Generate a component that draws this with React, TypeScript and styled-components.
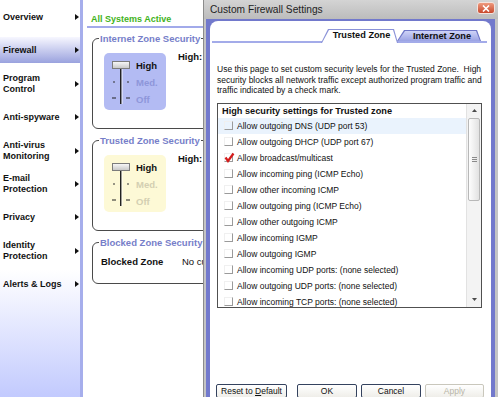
import styled, { createGlobalStyle } from "styled-components";

const GlobalStyle = createGlobalStyle`
  html, body {
    margin: 0;
    padding: 0;
  }
  body {
    font-family: "Liberation Sans", Arial, sans-serif;
    background: #fff;
  }
`;

const Screen = styled.div`
  display: flex;
  width: 498px;
  height: 397px;
  overflow: hidden;
  background: #fff;
`;

/* ---------- left navigation ---------- */

const Sidebar = styled.nav`
  flex: none;
  width: 80px;
  border-right: 3px solid #a6aeec;
  background: linear-gradient(to bottom, #fff 0%, #fff 68%, #c2cafe 100%);
  display: flex;
  flex-direction: column;
  gap: 7.4px;
  padding-top: 4px;
`;

const NavItem = styled.div<{ $active?: boolean }>`
  height: 26px;
  display: flex;
  align-items: center;
  justify-content: space-between;
  padding: 0 1px 0 3px;
  font-size: 9px;
  font-weight: bold;
  line-height: 11px;
  color: #111;
  background: ${(p) =>
    p.$active ? "linear-gradient(to bottom, #f7f7ff, #9aa2de)" : "transparent"};
`;

const Arrow = styled.span`
  width: 0;
  height: 0;
  border-left: 4px solid #111;
  border-top: 3px solid transparent;
  border-bottom: 3px solid transparent;
`;

/* ---------- main content (behind the dialog) ---------- */

const Content = styled.main`
  flex: none;
  width: 120px;
  overflow: hidden;
`;

const StatusHeader = styled.div`
  margin: 14px 0 0 4px;
  padding: 0 0 1px 4px;
  border-bottom: 2px solid #a2aaea;
  font-size: 9px;
  font-weight: bold;
  line-height: 11px;
  color: #3fb31c;
  white-space: nowrap;
`;

const Zone = styled.fieldset<{ $gap: number; $pad: string }>`
  margin: ${(p) => p.$gap}px 0 0 9px;
  padding: ${(p) => p.$pad};
  width: 200px;
  box-sizing: border-box;
  border: 1px solid #4a4a4a;
  border-radius: 6px;
`;

const ZoneTitle = styled.legend`
  margin-left: 6px;
  padding: 0 1px;
  font-size: 9.5px;
  font-weight: bold;
  line-height: 11px;
  color: #767ec9;
  white-space: nowrap;
`;

const ZoneRow = styled.div<{ $indent: number }>`
  display: flex;
  align-items: flex-start;
  gap: 12px;
  padding-left: ${(p) => p.$indent}px;
  font-size: 9.5px;
  line-height: 11px;
  white-space: nowrap;
  color: #111;
`;

const Strong = styled.span<{ $width?: number }>`
  font-weight: bold;
  margin-top: ${(p) => (p.$width ? 0 : -2)}px;
  width: ${(p) => (p.$width ? `${p.$width}px` : "auto")};
`;

const LevelBox = styled.div<{ $bg: string }>`
  flex: none;
  width: 62px;
  height: 57px;
  border-radius: 5px;
  background: ${(p) => p.$bg};
  display: flex;
`;

const LevelTrack = styled.svg`
  flex: none;
`;

const LevelLabels = styled.div`
  display: flex;
  flex-direction: column;
  gap: 6px;
  padding-top: 6.5px;
`;

const LevelLabel = styled.span<{ $color: string }>`
  font-size: 9.5px;
  font-weight: bold;
  line-height: 11px;
  color: ${(p) => p.$color};
`;

/* ---------- dialog window ---------- */

const Dialog = styled.section`
  flex: none;
  width: 295px;
  box-sizing: border-box;
  border-left: 1px solid #8c8c8c;
  padding: 0 3px 0 2px;
  background: #c4c4c4;
  display: flex;
  flex-direction: column;
`;

const TitleBar = styled.div`
  height: 19px;
  flex: none;
  display: flex;
  align-items: flex-start;
  justify-content: space-between;
  padding-left: 4px;
  background: linear-gradient(to bottom, #d4d4d4, #bcbcbc);
  margin: 0 -3px 0 -2px;
  padding-right: 3px;
  font-size: 10.2px;
  line-height: 19px;
  color: #1e1e1e;
`;

const TitleText = styled.span`
  margin-left: 2px;
`;

const CloseButton = styled.div`
  margin-top: 2px;
  width: 18px;
  height: 12px;
  box-sizing: border-box;
  border: 1px solid #f4e2dc;
  border-radius: 3px;
  background: linear-gradient(to bottom, #ee9a7e, #c8482c);
  display: flex;
  align-items: center;
  justify-content: center;
`;

const Frame = styled.div`
  flex: 1;
  background: #7279cc;
  padding: 2px 4px 0 4px;
  display: flex;
  margin: 0 -3px 0 -2px;
  border-right: 3px solid #c4c4c4;
  border-left: 2px solid #c4c4c4;
`;

const Panel = styled.div`
  flex: 1;
  background: #fff;
  border-radius: 8px 8px 0 0;
  display: flex;
  flex-direction: column;
  min-width: 0;
`;

const TabStrip = styled.div`
  margin: 8px 4px 0 2px;
  padding-right: 6px;
  height: 12px;
  display: flex;
  justify-content: flex-end;
  align-items: flex-end;
  border-bottom: 2px solid #a3abe9;
`;

const Tab = styled.div<{ $active?: boolean; $width: number }>`
  position: relative;
  width: ${(p) => p.$width}px;
  height: ${(p) => (p.$active ? 14 : 11)}px;
  margin-bottom: ${(p) => (p.$active ? -2 : 0)}px;
  margin-left: ${(p) => (p.$active ? 0 : -1)}px;
  z-index: ${(p) => (p.$active ? 2 : 1)};
  background: ${(p) => (p.$active ? "#8a92d8" : "#6d75c6")};
  clip-path: polygon(0 100%, 7px 0, calc(100% - 4px) 0, 100% 100%);
  display: flex;
  align-items: flex-start;
  justify-content: center;
  padding-left: ${(p) => (p.$active ? 4 : 6)}px;
  box-sizing: border-box;
  font-size: 9.2px;
  font-weight: bold;
  line-height: 12px;
  color: #111;

  &::before {
    content: "";
    position: absolute;
    left: 1px;
    right: 1px;
    top: 1px;
    bottom: 0;
    background: ${(p) =>
      p.$active ? "#fff" : "linear-gradient(to bottom, #cfd3f7, #9aa2e3)"};
    clip-path: polygon(0 100%, 7px 0, calc(100% - 4px) 0, 100% 100%);
  }
`;

const TabText = styled.span`
  position: relative;
`;

const Intro = styled.p`
  margin: 21px 0 0 7px;
  font-size: 8.5px;
  line-height: 10.5px;
  color: #111;
  white-space: nowrap;
`;

const ListBox = styled.div`
  margin: 7px 9px 0 7px;
  height: 205px;
  flex: none;
  box-sizing: border-box;
  border: 1px solid #505050;
  display: flex;
  overflow: hidden;
`;

const ListBody = styled.div`
  flex: 1;
  min-width: 0;
`;

const ListHeader = styled.div`
  height: 14px;
  padding-left: 4px;
  font-size: 9.2px;
  font-weight: bold;
  line-height: 14px;
  color: #111;
  white-space: nowrap;
`;

const Row = styled.div<{ $selected?: boolean }>`
  height: 16px;
  display: flex;
  align-items: center;
  gap: 4px;
  padding-left: 6px;
  background: ${(p) => (p.$selected ? "#eaf3fd" : "transparent")};
  font-size: 8.5px;
  color: #111;
  white-space: nowrap;
`;

const Check = styled.span`
  position: relative;
  flex: none;
  width: 9px;
  height: 9px;
  box-sizing: border-box;
  border-right: 1px solid #9a9a9a;
  border-bottom: 1px solid #9a9a9a;
  border-left: 1px solid #f0f0f0;
  border-top: 1px solid #f0f0f0;
`;

const CheckMark = styled.svg`
  position: absolute;
  left: -1px;
  top: -2px;
`;

const ScrollBar = styled.div`
  flex: none;
  width: 14px;
  background: #f3f3f3;
  border-left: 1px solid #e2e2e2;
  display: flex;
  flex-direction: column;
`;

const ScrollArrow = styled.div`
  height: 14px;
  flex: none;
  display: flex;
  align-items: center;
  justify-content: center;
`;

const ScrollThumb = styled.div`
  height: 83px;
  margin: 0 1px;
  box-sizing: border-box;
  border: 1px solid #b8b8b8;
  border-radius: 2px;
  background: linear-gradient(to right, #fdfdfd, #e2e2e2);
  display: flex;
  flex-direction: column;
  align-items: center;
  justify-content: center;
  gap: 1px;
`;

const Grip = styled.span`
  width: 5px;
  height: 1px;
  background: #8a8a8a;
`;

const Spacer = styled.div`
  flex: 1;
`;

const ButtonRow = styled.div`
  margin-top: 76px;
  padding-left: 6px;
  display: flex;
  gap: 4px;
`;

const Button = styled.div<{ $width: number; $disabled?: boolean; $spaced?: boolean }>`
  width: ${(p) => p.$width}px;
  height: 14px;
  box-sizing: border-box;
  margin-right: ${(p) => (p.$spaced ? 6 : 0)}px;
  border: 1px solid ${(p) => (p.$disabled ? "#c9c7bc" : "#34425e")};
  border-radius: 2px;
  background: linear-gradient(to bottom, #ffffff, #efeee9);
  color: ${(p) => (p.$disabled ? "#b8b5a8" : "#111")};
  font-size: 8.5px;
  line-height: 12px;
  text-align: center;
`;

/* ---------- data ---------- */

const navItems = [
  ["Overview"],
  ["Firewall"],
  ["Program", "Control"],
  ["Anti-spyware"],
  ["Anti-virus", "Monitoring"],
  ["E-mail", "Protection"],
  ["Privacy"],
  ["Identity", "Protection"],
  ["Alerts & Logs"],
];

const rules = [
  { label: "Allow outgoing DNS (UDP port 53)", selected: true },
  { label: "Allow outgoing DHCP (UDP port 67)" },
  { label: "Allow broadcast/multicast", checked: true },
  { label: "Allow incoming ping (ICMP Echo)" },
  { label: "Allow other incoming ICMP" },
  { label: "Allow outgoing ping (ICMP Echo)" },
  { label: "Allow other outgoing ICMP" },
  { label: "Allow incoming IGMP" },
  { label: "Allow outgoing IGMP" },
  { label: "Allow incoming UDP ports: (none selected)" },
  { label: "Allow outgoing UDP ports: (none selected)" },
  { label: "Allow incoming TCP ports: (none selected)" },
];

function SecurityLevel({ bg, dim }: { bg: string; dim: string }) {
  return (
    <LevelBox $bg={bg}>
      <LevelTrack width="32" height="57" viewBox="0 0 32 57">
        <defs>
          <linearGradient id="thumb" x1="0" y1="0" x2="0" y2="1">
            <stop offset="0" stopColor="#fafafa" />
            <stop offset="1" stopColor="#c6c6c6" />
          </linearGradient>
        </defs>
        <rect x="16" y="12" width="1.6" height="39" fill="#222" />
        <rect x="17.6" y="12" width="1" height="39" fill="#fff" opacity="0.7" />
        <rect x="8.5" y="8.5" width="17" height="7" fill="url(#thumb)" stroke="#7c7c7c" />
        <rect x="9" y="28.5" width="2" height="1" fill="#333" />
        <rect x="23" y="28.5" width="2" height="1" fill="#333" />
        <rect x="8" y="44.5" width="4" height="1" fill="#222" />
        <rect x="22" y="44.5" width="4" height="1" fill="#222" />
      </LevelTrack>
      <LevelLabels>
        <LevelLabel $color="#111">High</LevelLabel>
        <LevelLabel $color={dim}>Med.</LevelLabel>
        <LevelLabel $color={dim}>Off</LevelLabel>
      </LevelLabels>
    </LevelBox>
  );
}

export default function App() {
  return (
    <>
      <GlobalStyle />
      <Screen>
        <Sidebar>
          {navItems.map((lines) => (
            <NavItem key={lines[0]} $active={lines[0] === "Firewall"}>
              <span>
                {lines.map((l, i) => (
                  <span key={l}>
                    {i > 0 && <br />}
                    {l}
                  </span>
                ))}
              </span>
              <Arrow />
            </NavItem>
          ))}
        </Sidebar>

        <Content>
          <StatusHeader>All Systems Active</StatusHeader>
          <Zone $gap={5} $pad="9px 0 18px 0">
            <ZoneTitle>Internet Zone Security</ZoneTitle>
            <ZoneRow $indent={11}>
              <SecurityLevel bg="#b3bbf3" dim="#8e96da" />
              <Strong>High:</Strong>
            </ZoneRow>
          </Zone>
          <Zone $gap={6} $pad="9px 0 18px 0">
            <ZoneTitle>Trusted Zone Security</ZoneTitle>
            <ZoneRow $indent={11}>
              <SecurityLevel bg="#fdf9d6" dim="#d3cfb2" />
              <Strong>High:</Strong>
            </ZoneRow>
          </Zone>
          <Zone $gap={6} $pad="8px 0 16px 0">
            <ZoneTitle>Blocked Zone Security</ZoneTitle>
            <ZoneRow $indent={8}>
              <Strong $width={69}>Blocked Zone</Strong>
              <span>No custom settings</span>
            </ZoneRow>
          </Zone>
        </Content>

        <Dialog>
          <TitleBar>
            <TitleText>Custom Firewall Settings</TitleText>
            <CloseButton>
              <svg width="8" height="7" viewBox="0 0 8 7">
                <path d="M1 0.5 L7 6.5 M7 0.5 L1 6.5" stroke="#fff" strokeWidth="1.6" />
              </svg>
            </CloseButton>
          </TitleBar>
          <Frame>
            <Panel>
              <TabStrip>
                <Tab $active $width={77}>
                  <TabText>Trusted Zone</TabText>
                </Tab>
                <Tab $width={84}>
                  <TabText>Internet Zone</TabText>
                </Tab>
              </TabStrip>

              <Intro>
                Use this page to set custom security levels for the Trusted Zone.&nbsp; High
                <br />
                security blocks all network traffic except authorized program traffic and
                <br />
                traffic indicated by a check mark.
              </Intro>

              <ListBox>
                <ListBody>
                  <ListHeader>High security settings for Trusted zone</ListHeader>
                  {rules.map((r) => (
                    <Row key={r.label} $selected={r.selected}>
                      <Check>
                        {r.checked && (
                          <CheckMark width="11" height="11" viewBox="0 0 11 11">
                            <path
                              d="M1.5 5.5 L4 9 L9.5 1.5"
                              fill="none"
                              stroke="#d41c1c"
                              strokeWidth="2.2"
                            />
                          </CheckMark>
                        )}
                      </Check>
                      <span>{r.label}</span>
                    </Row>
                  ))}
                </ListBody>
                <ScrollBar>
                  <ScrollArrow>
                    <svg width="5" height="3" viewBox="0 0 5 3">
                      <polygon points="2.5,0 5,3 0,3" fill="#4a4a4a" />
                    </svg>
                  </ScrollArrow>
                  <ScrollThumb>
                    <Grip />
                    <Grip />
                    <Grip />
                  </ScrollThumb>
                  <Spacer />
                  <ScrollArrow>
                    <svg width="5" height="3" viewBox="0 0 5 3">
                      <polygon points="0,0 5,0 2.5,3" fill="#4a4a4a" />
                    </svg>
                  </ScrollArrow>
                </ScrollBar>
              </ListBox>

              <ButtonRow>
                <Button $width={71} $spaced>
                  Reset to <u>D</u>efault
                </Button>
                <Button $width={60}>OK</Button>
                <Button $width={60}>Cancel</Button>
                <Button $width={59} $disabled>
                  Apply
                </Button>
              </ButtonRow>
            </Panel>
          </Frame>
        </Dialog>
      </Screen>
    </>
  );
}
